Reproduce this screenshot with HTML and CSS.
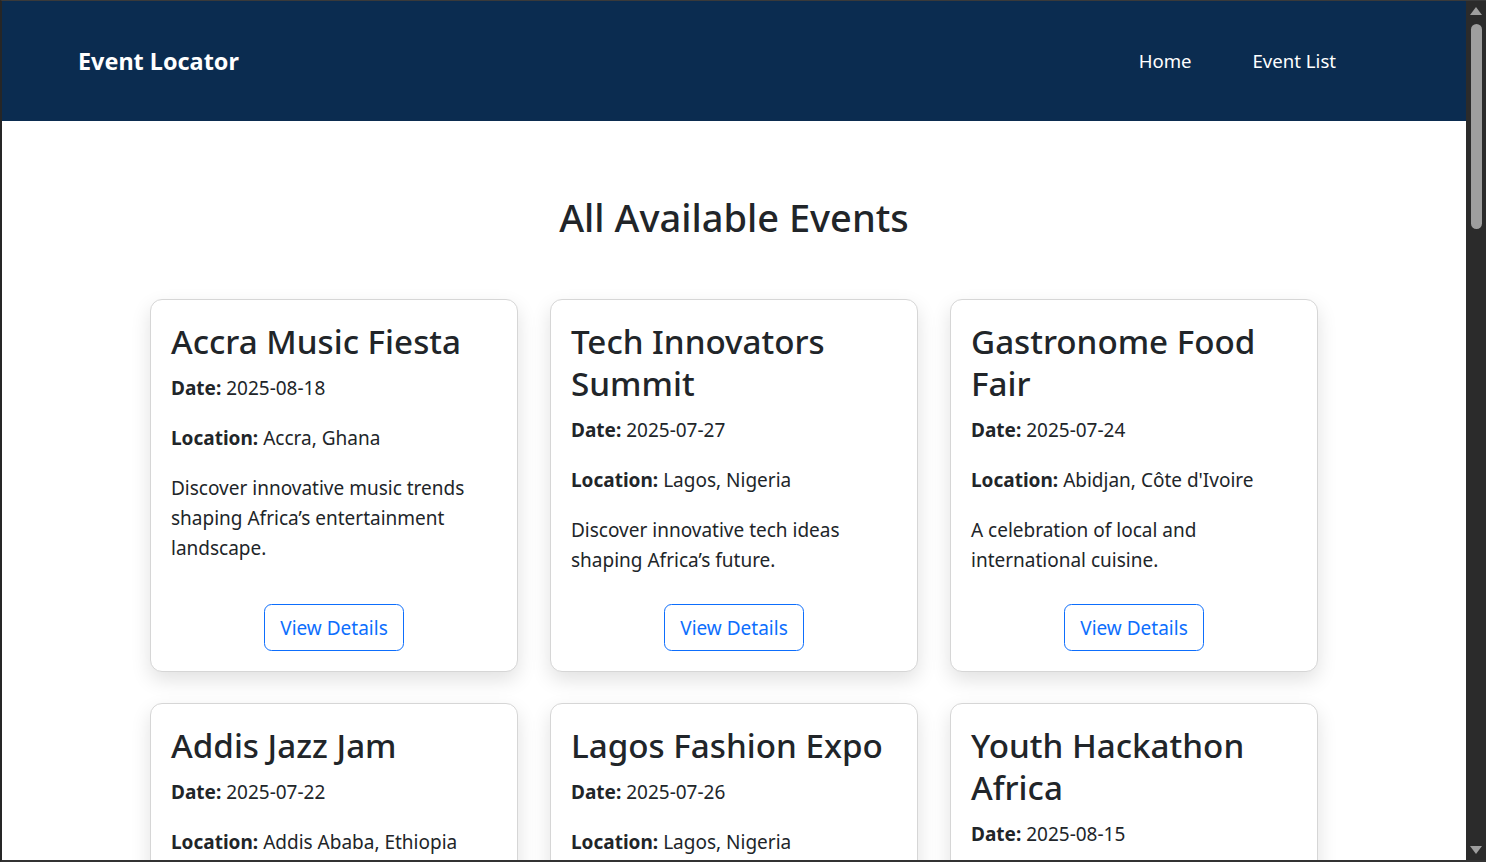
FILE: index.html
```html
<!DOCTYPE html>
<html lang="en">
<head>
<meta charset="utf-8">
<title>Event Locator</title>
<link rel="stylesheet" href="styles.css">
</head>
<body>
<div class="window">
  <div class="page">
    <nav class="navbar">
      <a class="brand" href="#">Event Locator</a>
      <div class="nav-links">
        <a class="nav-link" href="#">Home</a>
        <a class="nav-link" href="#">Event List</a>
      </div>
    </nav>
    <main class="content">
      <h2 class="page-title">All Available Events</h2>
      <div class="grid">
        <div class="card">
          <h3 class="card-title">Accra Music Fiesta</h3>
          <p><strong>Date:</strong> 2025-08-18</p>
          <p><strong>Location:</strong> Accra, Ghana</p>
          <p>Discover innovative music trends shaping Africa’s entertainment landscape.</p>
          <div class="card-action"><a class="btn" href="#">View Details</a></div>
        </div>
        <div class="card">
          <h3 class="card-title">Tech Innovators Summit</h3>
          <p><strong>Date:</strong> 2025-07-27</p>
          <p><strong>Location:</strong> Lagos, Nigeria</p>
          <p>Discover innovative tech ideas shaping Africa’s future.</p>
          <div class="card-action"><a class="btn" href="#">View Details</a></div>
        </div>
        <div class="card">
          <h3 class="card-title">Gastronome Food Fair</h3>
          <p><strong>Date:</strong> 2025-07-24</p>
          <p><strong>Location:</strong> Abidjan, Côte d'Ivoire</p>
          <p>A celebration of local and international cuisine.</p>
          <div class="card-action"><a class="btn" href="#">View Details</a></div>
        </div>
        <div class="card">
          <h3 class="card-title">Addis Jazz Jam</h3>
          <p><strong>Date:</strong> 2025-07-22</p>
          <p><strong>Location:</strong> Addis Ababa, Ethiopia</p>
          <p>An evening of Ethio-jazz and live improvisation.</p>
          <div class="card-action"><a class="btn" href="#">View Details</a></div>
        </div>
        <div class="card">
          <h3 class="card-title">Lagos Fashion Expo</h3>
          <p><strong>Date:</strong> 2025-07-26</p>
          <p><strong>Location:</strong> Lagos, Nigeria</p>
          <p>Showcasing the best of African fashion design.</p>
          <div class="card-action"><a class="btn" href="#">View Details</a></div>
        </div>
        <div class="card">
          <h3 class="card-title">Youth Hackathon Africa</h3>
          <p><strong>Date:</strong> 2025-08-15</p>
          <p><strong>Location:</strong> Nairobi, Kenya</p>
          <p>Young developers building solutions for Africa.</p>
          <div class="card-action"><a class="btn" href="#">View Details</a></div>
        </div>
      </div>
    </main>
  </div>
  <div class="scrollbar">
    <div class="arrow arrow-up"></div>
    <div class="track"><div class="thumb"></div></div>
    <div class="arrow arrow-down"></div>
  </div>
</div>
</body>
</html>
```

FILE: styles.css
```css
* { box-sizing: border-box; }

html, body {
  margin: 0;
  height: 862px;
  overflow: hidden;
}

body {
  font-family: "Noto Sans", "Open Sans", sans-serif;
  font-size: 19px;
  line-height: 30px;
  color: #212529;
  background: #2b2b2b;
}

.window {
  display: flex;
  height: 862px;
  border-top: 1px solid #3a3a3a;
  border-left: 2px solid #262626;
  border-bottom: 2px solid #333;
}

.page {
  flex: 1;
  background: #fff;
  overflow: hidden;
}

.navbar {
  height: 120px;
  background: #0b2c50;
  display: flex;
  align-items: center;
  justify-content: space-between;
  padding: 0 130px 0 76px;
}

.brand {
  color: #fff;
  font-weight: 700;
  font-size: 23.4px;
  text-decoration: none;
}

.nav-links {
  display: flex;
  gap: 61px;
}

.nav-link {
  color: #fff;
  text-decoration: none;
  font-size: 18.6px;
}

.content {
  padding-top: 72px;
}

.page-title {
  margin: 0 0 58px;
  text-align: center;
  font-size: 38px;
  line-height: 48px;
  font-weight: 500;
}

.grid {
  width: 1168px;
  margin: 0 auto;
  display: grid;
  grid-template-columns: repeat(3, 1fr);
  gap: 31px 32px;
}

.card {
  display: flex;
  flex-direction: column;
  padding: 21px 20px 20px;
  border: 1px solid #d6d6d6;
  border-radius: 12px;
  background: #fff;
  box-shadow: 0 8px 20px rgba(0, 0, 0, 0.12);
}

.card-title {
  margin: 0 0 10px;
  font-size: 33.2px;
  line-height: 42px;
  font-weight: 500;
}

.card p {
  margin: 0 0 20px;
}

.card strong {
  font-weight: 700;
}

.card-action {
  margin-top: auto;
  padding-top: 9px;
  text-align: center;
}

.btn {
  display: inline-block;
  padding: 7.5px 15px;
  border: 1px solid #0d6efd;
  border-radius: 7.5px;
  color: #0d6efd;
  text-decoration: none;
  font-size: 19px;
  line-height: 30px;
}

.scrollbar {
  width: 20px;
  background: #2b2b2b;
  display: flex;
  flex-direction: column;
  align-items: center;
}

.arrow {
  width: 0;
  height: 0;
  border-left: 6px solid transparent;
  border-right: 6px solid transparent;
}

.arrow-up {
  margin-top: 6px;
  border-bottom: 8px solid #9e9e9e;
}

.arrow-down {
  margin-bottom: 6px;
  border-top: 8px solid #9e9e9e;
}

.track {
  flex: 1;
  width: 100%;
  display: flex;
  justify-content: center;
  padding-top: 9px;
}

.thumb {
  width: 11px;
  height: 205px;
  border-radius: 6px;
  background: #9e9e9e;
}
```
